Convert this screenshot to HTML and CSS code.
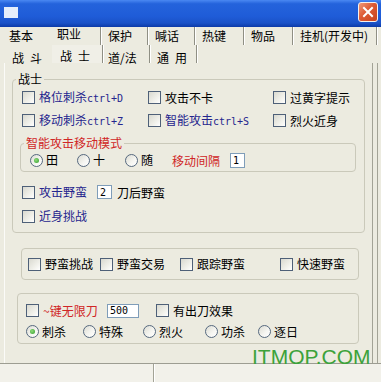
FILE: index.html
```html
<!DOCTYPE html>
<html lang="zh">
<head>
<meta charset="utf-8">
<link rel="stylesheet" href="styles.css">
</head>
<body>
<div class="titlebar">
  <span class="appicon"></span>
  <span class="close"><svg width="12" height="12" viewBox="0 0 12 12"><path d="M2 2 L10 10 M10 2 L2 10" stroke="#fff" stroke-width="2" stroke-linecap="square"/></svg></span>
</div>
<div class="tabs row1">
  <span class="tab t50 nosep">基本</span>
  <span class="tab t49 sel">职业</span>
  <span class="tab t47">保护</span>
  <span class="tab t47">喊话</span>
  <span class="tab t49">热键</span>
  <span class="tab t49">物品</span>
  <span class="tab t84">挂机(开发中)</span>
</div>
<div class="tabs row2">
  <span class="tab t50 nosep p10">战&ensp;斗</span>
  <span class="tab t51 sel p8">战&ensp;士</span>
  <span class="tab t47 p5">道/法</span>
  <span class="tab t47 p7">通&ensp;用</span>
</div>
<div class="frame">
  <div class="page">
    <fieldset class="grp g-warrior">
      <legend>战士</legend>
      <div class="grid3">
        <label class="cb blue"><span class="box"></span><span>格位刺杀<span class="mono">ctrl+D</span></span></label>
        <label class="cb"><span class="box"></span>攻击不卡</label>
        <label class="cb"><span class="box"></span>过黄字提示</label>
        <label class="cb blue"><span class="box"></span><span>移动刺杀<span class="mono">ctrl+Z</span></span></label>
        <label class="cb blue"><span class="box"></span><span>智能攻击<span class="mono">ctrl+S</span></span></label>
        <label class="cb"><span class="box"></span>烈火近身</label>
      </div>
      <fieldset class="grp g-mode">
        <legend class="red">智能攻击移动模式</legend>
        <div class="radios">
          <label class="rb w47"><span class="rd on"></span>田</label>
          <label class="rb w48"><span class="rd"></span>十</label>
          <label class="rb w47"><span class="rd"></span>随</label>
          <span class="red">移动间隔</span>
          <span class="inp i1">1</span>
        </div>
      </fieldset>
      <div class="row r1">
        <label class="cb blue"><span class="box"></span>攻击野蛮</label>
        <span class="inp i2">2</span>
        <span class="after">刀后野蛮</span>
      </div>
      <div class="row">
        <label class="cb blue"><span class="box"></span>近身挑战</label>
      </div>
    </fieldset>

    <div class="grp g2">
      <label class="cb c72"><span class="box"></span>野蛮挑战</label>
      <label class="cb c80"><span class="box"></span>野蛮交易</label>
      <label class="cb c100"><span class="box"></span>跟踪野蛮</label>
      <label class="cb"><span class="box"></span>快速野蛮</label>
    </div>

    <div class="grp g3">
      <div class="g3row">
        <label class="cb red c81"><span class="box"></span>~键无限刀</label>
        <span class="c49"><span class="inp i3">500</span></span>
        <label class="cb"><span class="box"></span>有出刀效果</label>
      </div>
      <div class="g3row">
        <label class="rb w57"><span class="rd on"></span>刺杀</label>
        <label class="rb w60"><span class="rd"></span>特殊</label>
        <label class="rb w62"><span class="rd"></span>烈火</label>
        <label class="rb w53"><span class="rd"></span>功杀</label>
        <label class="rb"><span class="rd"></span>逐日</label>
      </div>
    </div>
  </div>
</div>
<div class="status">
  <div class="panel p1"></div>
  <div class="panel"></div>
</div>
<div class="watermark">ITMOP.COM</div>
</body>
</html>
```
FILE: styles.css
```css
html, body {
  margin: 0;
  padding: 0;
}
body {
  width: 381px;
  height: 382px;
  overflow: hidden;
  position: relative;
  background: #ecebe0;
  font-family: "Noto Sans CJK SC", "Noto Sans", sans-serif;
  font-size: 12px;
  color: #000;
}

/* title bar */
.titlebar {
  height: 27px;
  box-sizing: border-box;
  display: flex;
  justify-content: space-between;
  align-items: flex-start;
  background: linear-gradient(#4a88f2 0%, #2463dc 14%, #1f5cd8 60%, #1a52c8 85%, #0c3aa8 100%);
}
.appicon {
  width: 14px;
  height: 11px;
  margin: 7px 0 0 4px;
  background: #e6eefb;
}
.close {
  width: 20px;
  height: 20px;
  box-sizing: border-box;
  margin: 2px 3px 0 0;
  border: 1px solid #f4f0ee;
  border-radius: 3px;
  background: linear-gradient(135deg, #f09a7a 0%, #dd5a34 45%, #c8441e 100%);
  display: flex;
  align-items: center;
  justify-content: center;
}

/* tabs */
.tabs {
  display: flex;
  height: 18px;
  padding-left: 2px;
}
.tab {
  box-sizing: border-box;
  height: 18px;
  display: flex;
  align-items: center;
  padding-left: 7px;
  white-space: nowrap;
  border-right: 1px solid #8f8f84;
  box-shadow: 1px 0 0 #ffffff;
}
.tab.nosep {
  border-right-color: transparent;
  box-shadow: none;
}
.row1 .tab { padding-bottom: 2px; }
.row1 .tab.sel { padding-bottom: 6px; padding-left: 5px; }
.row2 .tab { padding-top: 6px; }
.row2 .tab.sel { padding-top: 2px; background: #f0efe7; }
.t47 { width: 47px; }
.t49 { width: 49px; }
.t50 { width: 50px; }
.t51 { width: 51px; }
.t84 { width: 84px; }
.tab.p10 { padding-left: 10px; }
.tab.p8 { padding-left: 8px; }
.tab.p7 { padding-left: 7px; }
.tab.p5 { padding-left: 5px; }

/* frame */
.frame {
  margin-left: 4px;
  width: 374px;
  height: 300px;
  box-sizing: border-box;
  border-right: 1px solid #a3a396;
}
.page {
  margin-right: 4px;
  height: 300px;
  box-sizing: border-box;
  border-left: 1px solid #fbfbf8;
  border-right: 1px solid #a3a396;
  padding-top: 9px;
}

/* group boxes */
.grp {
  border: 1px solid #cac9ba;
  border-radius: 4px;
  padding: 0;
  min-width: 0;
}
fieldset.grp legend {
  padding: 0 2px;
  margin-left: 3px;
  line-height: 14px;
  font-size: 12px;
}
.g-warrior {
  margin: 0 7px 0 7px;
  padding-bottom: 4px;
}
.grid3 {
  display: grid;
  grid-template-columns: 126px 125px auto;
  grid-auto-rows: 23px;
  padding-left: 9px;
}
.g-mode {
  margin: 4px 8px 0 7px;
  padding-bottom: 1px;
}
.g-mode legend {
  margin-left: 4px;
}
.radios {
  display: flex;
  align-items: center;
  height: 20px;
  padding-left: 9px;
}
.row {
  display: flex;
  align-items: center;
  height: 24px;
  padding-left: 9px;
}
.row.r1 { margin-top: 8px; }

.g2 {
  margin: 15px 13px 0 16px;
  height: 32px;
  box-sizing: border-box;
  display: flex;
  align-items: center;
  padding-left: 6px;
}
.g3 {
  margin: 13px 13px 0 12px;
  padding: 6px 0 1px 8px;
}
.g3row {
  display: flex;
  align-items: center;
  height: 21px;
}

/* controls */
.cb, .rb {
  display: flex;
  align-items: center;
  white-space: nowrap;
  line-height: 14px;
}
.box {
  flex: none;
  width: 13px;
  height: 13px;
  box-sizing: border-box;
  border: 1px solid #4e6078;
  background: linear-gradient(135deg, #d9d9d0 0%, #f0f0ea 60%, #ffffff 100%);
  margin-right: 4px;
}
.rd {
  flex: none;
  width: 13px;
  height: 13px;
  box-sizing: border-box;
  border: 1px solid #56697f;
  border-radius: 50%;
  background: linear-gradient(135deg, #dcdcd3 0%, #f6f6f2 60%, #ffffff 100%);
  margin-right: 3px;
  display: flex;
  align-items: center;
  justify-content: center;
}
.rd.on::after {
  content: "";
  width: 5px;
  height: 5px;
  border-radius: 50%;
  background: radial-gradient(circle at 40% 40%, #8fdc7a, #2f9a2a);
}
.mono {
  font-family: "DejaVu Sans Mono", monospace;
  font-size: 10px;
  vertical-align: baseline;
}
.blue { color: #25258e; }
.red { color: #d02626; }

.inp {
  display: flex;
  align-items: center;
  box-sizing: border-box;
  border: 1px solid #7f9db9;
  background: #fff;
  font-family: "DejaVu Sans Mono", monospace;
  font-size: 10px;
  color: #000;
  padding-left: 2px;
}
.i1 { width: 15px; height: 15px; margin-left: 10px; }
.i2 { width: 15px; height: 14px; margin-left: 10px; }
.i3 { width: 32px; height: 14px; }
.after { margin-left: 5px; }

.w47 { width: 47px; }
.w48 { width: 48px; }
.w53 { width: 53px; }
.w57 { width: 57px; }
.w60 { width: 60px; }
.w62 { width: 62px; }
.c72 { width: 72px; }
.c80 { width: 80px; }
.c100 { width: 100px; }
.c81 { width: 81px; }
.c49 { width: 49px; display: flex; }

/* status bar */
.status {
  display: flex;
  height: 19px;
  box-sizing: border-box;
  border-top: 1px solid #9d9d92;
  background: #f2f1ea;
}
.panel {
  flex: 1;
}
.panel.p1 {
  flex: none;
  width: 153px;
  border-right: 1px solid #a3a396;
  box-shadow: 1px 0 0 #ffffff;
}

/* watermark overlay */
.watermark {
  position: absolute;
  left: 252px;
  top: 346px;
  font-family: "Liberation Sans", Arial, sans-serif;
  font-size: 21px;
  line-height: 21px;
  color: #3ca23a;
  white-space: nowrap;
}
```
